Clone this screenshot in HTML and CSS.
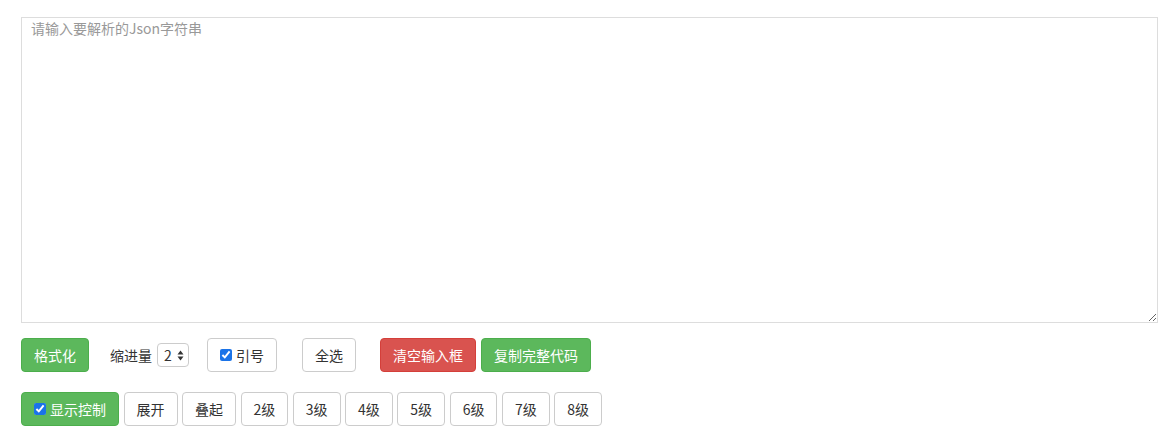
FILE: index.html
```html
<!DOCTYPE html>
<html lang="zh-CN">
<head>
  <meta charset="UTF-8">
  <title>Json格式化</title>
  <link rel="stylesheet" href="styles.css">
</head>
<body>
  <div class="wrap">
    <textarea class="json-input" placeholder="请输入要解析的Json字符串"></textarea>

    <div class="toolbar">
      <button class="btn btn-green">格式化</button>
      <span class="label">缩进量</span>
      <div class="select-box">
        <select>
          <option>1</option>
          <option selected>2</option>
          <option>3</option>
          <option>4</option>
        </select>
        <svg class="arrows" width="7" height="11" viewBox="0 0 7 11">
          <path d="M3.5 0.5 L6.5 4.5 L0.5 4.5 Z" fill="#333"/>
          <path d="M3.5 10.5 L6.5 6.5 L0.5 6.5 Z" fill="#333"/>
        </svg>
      </div>
      <label class="btn btn-default quote"><input type="checkbox" checked>引号</label>
      <button class="btn btn-default select-all">全选</button>
      <button class="btn btn-red clear">清空输入框</button>
      <button class="btn btn-green copy">复制完整代码</button>
    </div>

    <div class="toolbar levels">
      <label class="btn btn-green"><input type="checkbox" checked>显示控制</label>
      <button class="btn btn-default">展开</button>
      <button class="btn btn-default">叠起</button>
      <button class="btn btn-default">2级</button>
      <button class="btn btn-default">3级</button>
      <button class="btn btn-default">4级</button>
      <button class="btn btn-default">5级</button>
      <button class="btn btn-default">6级</button>
      <button class="btn btn-default">7级</button>
      <button class="btn btn-default">8级</button>
    </div>
  </div>
</body>
</html>
```

FILE: styles.css
```css
body {
  margin: 0;
  background-color: #fff;
  color: #333;
  font-family: "Noto Sans CJK SC", "Liberation Sans", sans-serif;
  font-size: 14px;
  line-height: 20px;
}

.wrap {
  padding: 17px 14px 0 21px;
}

.json-input {
  display: block;
  box-sizing: border-box;
  width: 1137px;
  height: 306px;
  margin: 0;
  padding: 0 9px;
  border: 1px solid #ddd;
  border-radius: 0;
  font-family: inherit;
  font-size: 14px;
  line-height: 20px;
  color: #333;
  resize: both;
}

.json-input::placeholder {
  color: #999;
}

.toolbar {
  display: flex;
  align-items: center;
  margin-top: 15px;
}

.toolbar.levels {
  margin-top: 20px;
  gap: 4.5px;
}

.btn {
  display: inline-flex;
  align-items: center;
  box-sizing: border-box;
  height: 34px;
  margin: 0;
  padding: 6px 12px;
  border: 1px solid transparent;
  border-radius: 4px;
  font-family: inherit;
  font-size: 14px;
  line-height: 20px;
  white-space: nowrap;
  cursor: pointer;
}

.btn input {
  width: 12px;
  height: 12px;
  margin: 0 4px 0 0;
  accent-color: #1a73e8;
}

.btn-default {
  background-color: #fff;
  border-color: #ccc;
  color: #333;
}

.btn-green {
  background-color: #5cb85c;
  border-color: #4cae4c;
  color: #fff;
}

.btn-red {
  background-color: #d9534f;
  border-color: #d43f3a;
  color: #fff;
}

.label {
  margin-left: 21px;
}

.select-box {
  position: relative;
  margin-left: 5px;
}

.select-box select {
  appearance: none;
  -webkit-appearance: none;
  box-sizing: border-box;
  width: 32px;
  height: 24px;
  padding: 0 0 0 6px;
  border: 1px solid #ccc;
  border-radius: 4px;
  background: #fff;
  color: #333;
  font-family: inherit;
  font-size: 14px;
}

.arrows {
  position: absolute;
  right: 5px;
  top: 7px;
  pointer-events: none;
}

.quote {
  margin-left: 18px;
}

.select-all {
  margin-left: 25px;
}

.clear {
  margin-left: 24px;
}

.copy {
  margin-left: 5px;
}
```
